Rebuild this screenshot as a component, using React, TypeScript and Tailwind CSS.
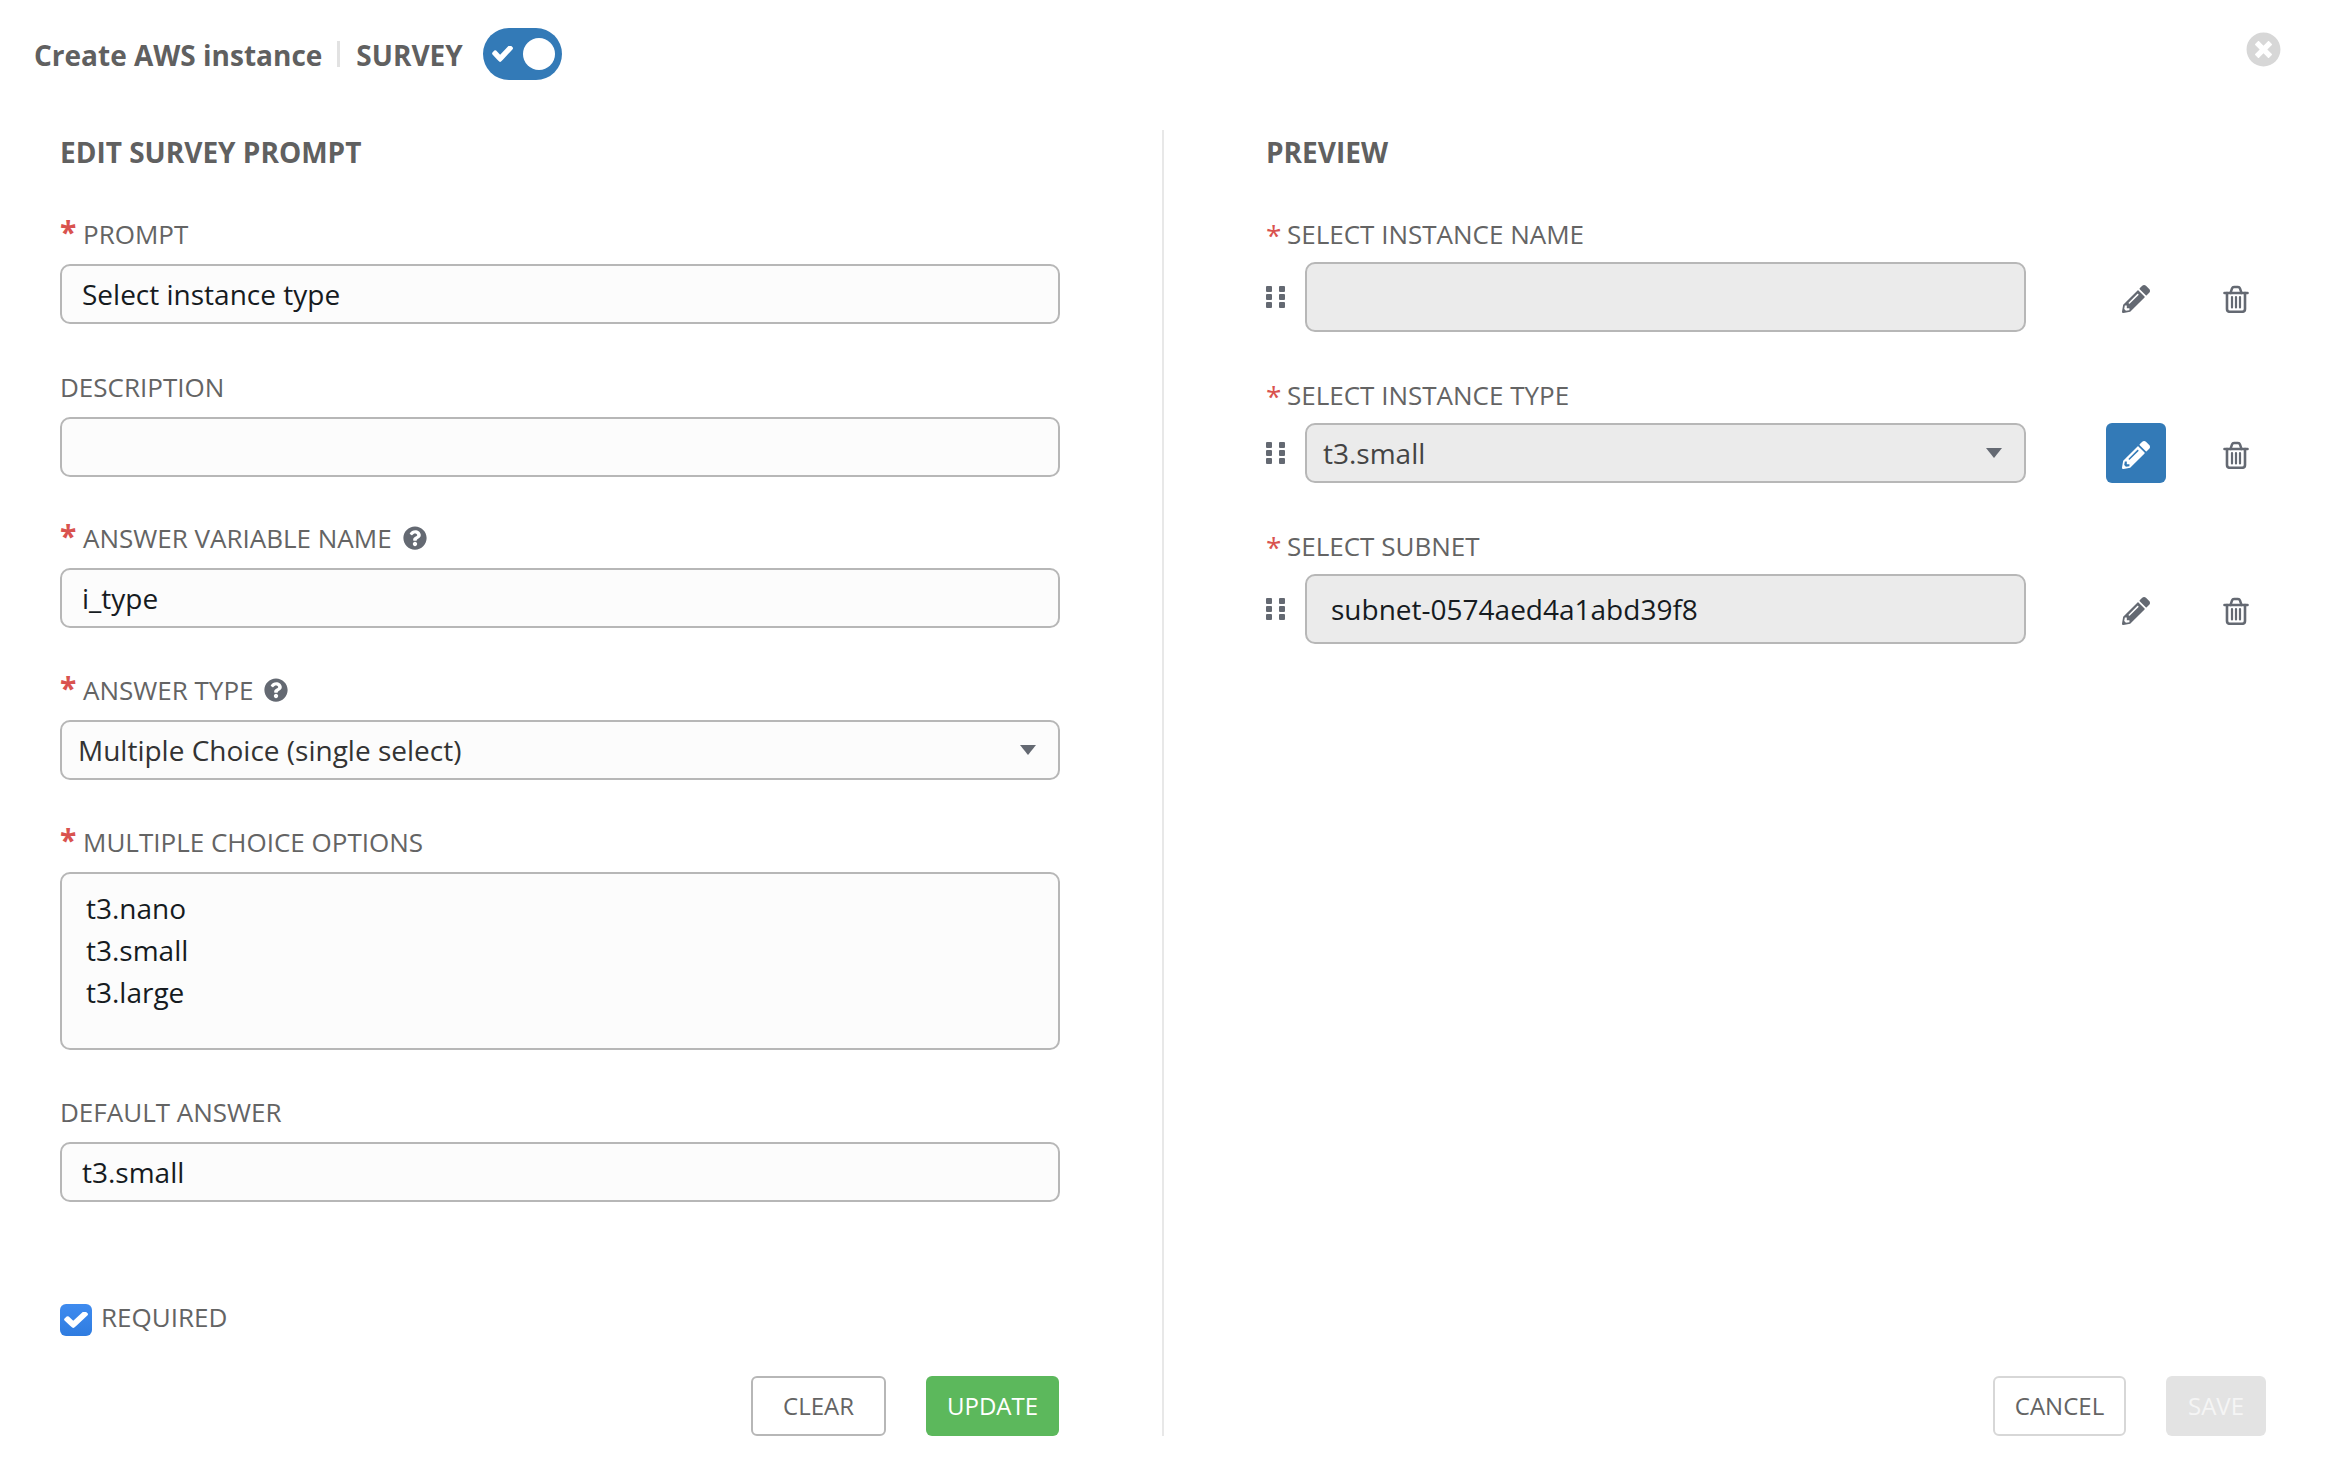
import { FaPencilAlt, FaQuestionCircle, FaTimesCircle } from "react-icons/fa";

function Label({
  text,
  required = false,
  help = false,
  starClass = "w-[23px] mt-[-4px] text-[30px] font-bold",
}: {
  text: string;
  required?: boolean;
  help?: boolean;
  starClass?: string;
}) {
  return (
    <div className="flex h-[36px] items-center text-[26px] text-[#646464]">
      {required && <span className={`${starClass} leading-none text-[#d9534f]`}>*</span>}
      <span>{text}</span>
      {help && <FaQuestionCircle className="ml-[11px] h-[24px] w-[24px] text-[#646972]" />}
    </div>
  );
}

const inputClass =
  "mt-[12px] h-[60px] w-full rounded-[10px] border-[2px] border-[#b7b7b7] bg-[#fcfcfc] px-[20px] text-[28px] text-[#161b1f] outline-none";

function Caret() {
  return (
    <span className="pointer-events-none absolute top-1/2 right-[22px] -translate-y-1/2 border-x-[8px] border-t-[10px] border-x-transparent border-t-[#646972]" />
  );
}

function CheckIcon({ className }: { className: string }) {
  return (
    <svg viewBox="113 402 1558 1120" preserveAspectRatio="none" className={className} fill="currentColor">
      <path d="M1671 566q0 40-28 68l-724 724-136 136q-28 28-68 28t-68-28l-136-136-362-362q-28-28-28-68t28-68l136-136q28-28 68-28t68 28l294 295 656-657q28-28 68-28t68 28l136 136q28 28 28 68z" />
    </svg>
  );
}

function TrashIcon() {
  return (
    <svg viewBox="0 0 26 28" className="mt-[3px] h-[28px] w-[26px]" fill="none" stroke="currentColor" strokeLinecap="round">
      <path d="M1.5 8H24.5" strokeWidth="2.6" />
      <path d="M7.5 8L9 3.5Q9.5 2 11 2H15Q16.5 2 17 3.5L18.5 8" strokeWidth="2.4" />
      <path d="M4 8V24Q4 26.8 7 26.8H19Q22 26.8 22 24V8" strokeWidth="2.6" />
      <path d="M9 12V22.5M13 12V22.5M17 12V22.5" strokeWidth="2.2" />
    </svg>
  );
}

function PreviewRow({
  label,
  active = false,
  children,
}: {
  label: string;
  active?: boolean;
  children: React.ReactNode;
}) {
  return (
    <div className="mb-[45px]">
      <Label text={label} required starClass="w-[21px] mt-[1px] text-[28px] font-normal" />
      <div className="mt-[10px] flex items-center">
        <div className="grid w-[19px] grid-cols-2 gap-x-[7px] gap-y-[2px]">
          {[0, 1, 2, 3, 4, 5].map((i) => (
            <span key={i} className="h-[6px] w-[6px] rounded-[1px] bg-[#646972]" />
          ))}
        </div>
        <div className="ml-[20px] w-[721px]">{children}</div>
        <button
          type="button"
          className={`ml-[80px] flex h-[60px] w-[60px] items-center justify-center rounded-[6px] ${
            active ? "bg-[#337ab7] text-white" : "text-[#646972]"
          }`}
        >
          <FaPencilAlt className="mt-[4px] h-[28px] w-[28px]" />
        </button>
        <div className="ml-[40px] flex w-[60px] justify-center text-[#646972]">
          <TrashIcon />
        </div>
      </div>
    </div>
  );
}

export default function App() {
  return (
    <div className="h-[1464px] w-[2326px] bg-white font-['Open_Sans',sans-serif]">
      <header className="relative mb-[22px] flex h-[108px] items-center pl-[34px] text-[28px] font-bold text-[#606060]">
        <span className="mt-[2px]">Create AWS instance</span>
        <span className="mr-[16px] ml-[15px] h-[26px] w-[3px] bg-[#e2e2e2]" />
        <span className="mt-[2px]">SURVEY</span>
        <div className="ml-[20px] flex h-[52px] w-[79px] items-center justify-between rounded-full bg-[#337ab7] pr-[7px] pl-[9px]">
          <CheckIcon className="h-[16px] w-[21px] text-white" />
          <span className="h-[32px] w-[32px] rounded-full bg-white" />
        </div>
        <FaTimesCircle className="absolute top-[32px] right-[45px] h-[35px] w-[35px] text-[#d7d7d7]" />
      </header>

      <div className="flex h-[1306px]">
        <section className="flex w-[1162px] flex-col pr-[102px] pl-[60px]">
          <h2 className="mb-[43px] flex h-[43px] items-center text-[28px] font-bold text-[#606060]">
            EDIT SURVEY PROMPT
          </h2>

          <Label text="PROMPT" required />
          <input readOnly value="Select instance type" className={`${inputClass} mb-[45px]`} />

          <Label text="DESCRIPTION" />
          <input readOnly value="" className={`${inputClass} mb-[43px]`} />

          <Label text="ANSWER VARIABLE NAME" required help />
          <input readOnly value="i_type" className={`${inputClass} mb-[44px]`} />

          <Label text="ANSWER TYPE" required help />
          <div className="relative mt-[12px] mb-[44px] flex h-[60px] items-center rounded-[10px] border-[2px] border-[#b7b7b7] bg-[#fcfcfc] pl-[16px] text-[28px] text-[#333333]">
            Multiple Choice (single select)
            <Caret />
          </div>

          <Label text="MULTIPLE CHOICE OPTIONS" required />
          <textarea
            readOnly
            value={"t3.nano\nt3.small\nt3.large"}
            className="mt-[12px] mb-[44px] h-[178px] w-full resize-none rounded-[10px] border-[2px] border-[#b7b7b7] bg-[#fcfcfc] px-[24px] py-[13px] text-[28px] leading-[42px] text-[#161b1f] outline-none"
          />

          <Label text="DEFAULT ANSWER" />
          <input readOnly value="t3.small" className={inputClass} />

          <div className="mt-[102px] flex h-[32px] items-center">
            <span className="flex h-[32px] w-[32px] items-center justify-center rounded-[6px] bg-gradient-to-b from-[#3f8bef] to-[#2f7ce0]">
              <CheckIcon className="h-[16px] w-[24px] text-white" />
            </span>
            <span className="mt-[-6px] ml-[9px] text-[26px] text-[#646464]">REQUIRED</span>
          </div>

          <div className="mt-[40px] mr-[1px] flex justify-end gap-[40px]">
            <button
              type="button"
              className="h-[60px] w-[135px] rounded-[6px] border-[2px] border-[#b7b7b7] bg-white text-[24px] text-[#646464]"
            >
              CLEAR
            </button>
            <button type="button" className="h-[60px] w-[133px] rounded-[6px] bg-[#5cb85c] text-[24px] text-white">
              UPDATE
            </button>
          </div>
        </section>

        <section className="flex h-[1306px] w-[1164px] flex-col border-l-[2px] border-[#e8e8e8] pr-[60px] pl-[102px]">
          <h2 className="mb-[43px] flex h-[43px] items-center text-[28px] font-bold text-[#606060]">PREVIEW</h2>

          <PreviewRow label="SELECT INSTANCE NAME">
            <div className="h-[70px] rounded-[10px] border-[2px] border-[#b7b7b7] bg-[#ebebeb]" />
          </PreviewRow>

          <PreviewRow label="SELECT INSTANCE TYPE" active>
            <div className="relative flex h-[60px] items-center rounded-[10px] border-[2px] border-[#b7b7b7] bg-[#ebebeb] pl-[16px] text-[28px] text-[#444444]">
              t3.small
              <Caret />
            </div>
          </PreviewRow>

          <PreviewRow label="SELECT SUBNET">
            <div className="flex h-[70px] items-center rounded-[10px] border-[2px] border-[#b7b7b7] bg-[#ebebeb] pl-[24px] text-[28px] text-[#161b1f]">
              subnet-0574aed4a1abd39f8
            </div>
          </PreviewRow>

          <div className="mt-auto flex justify-end gap-[40px]">
            <button
              type="button"
              className="h-[60px] w-[133px] rounded-[6px] border-[2px] border-[#d7d7d7] bg-white text-[24px] text-[#646464]"
            >
              CANCEL
            </button>
            <button type="button" className="h-[60px] w-[100px] rounded-[6px] bg-[#e3e3e3] text-[24px] text-[#f5f5f5]">
              SAVE
            </button>
          </div>
        </section>
      </div>
    </div>
  );
}
